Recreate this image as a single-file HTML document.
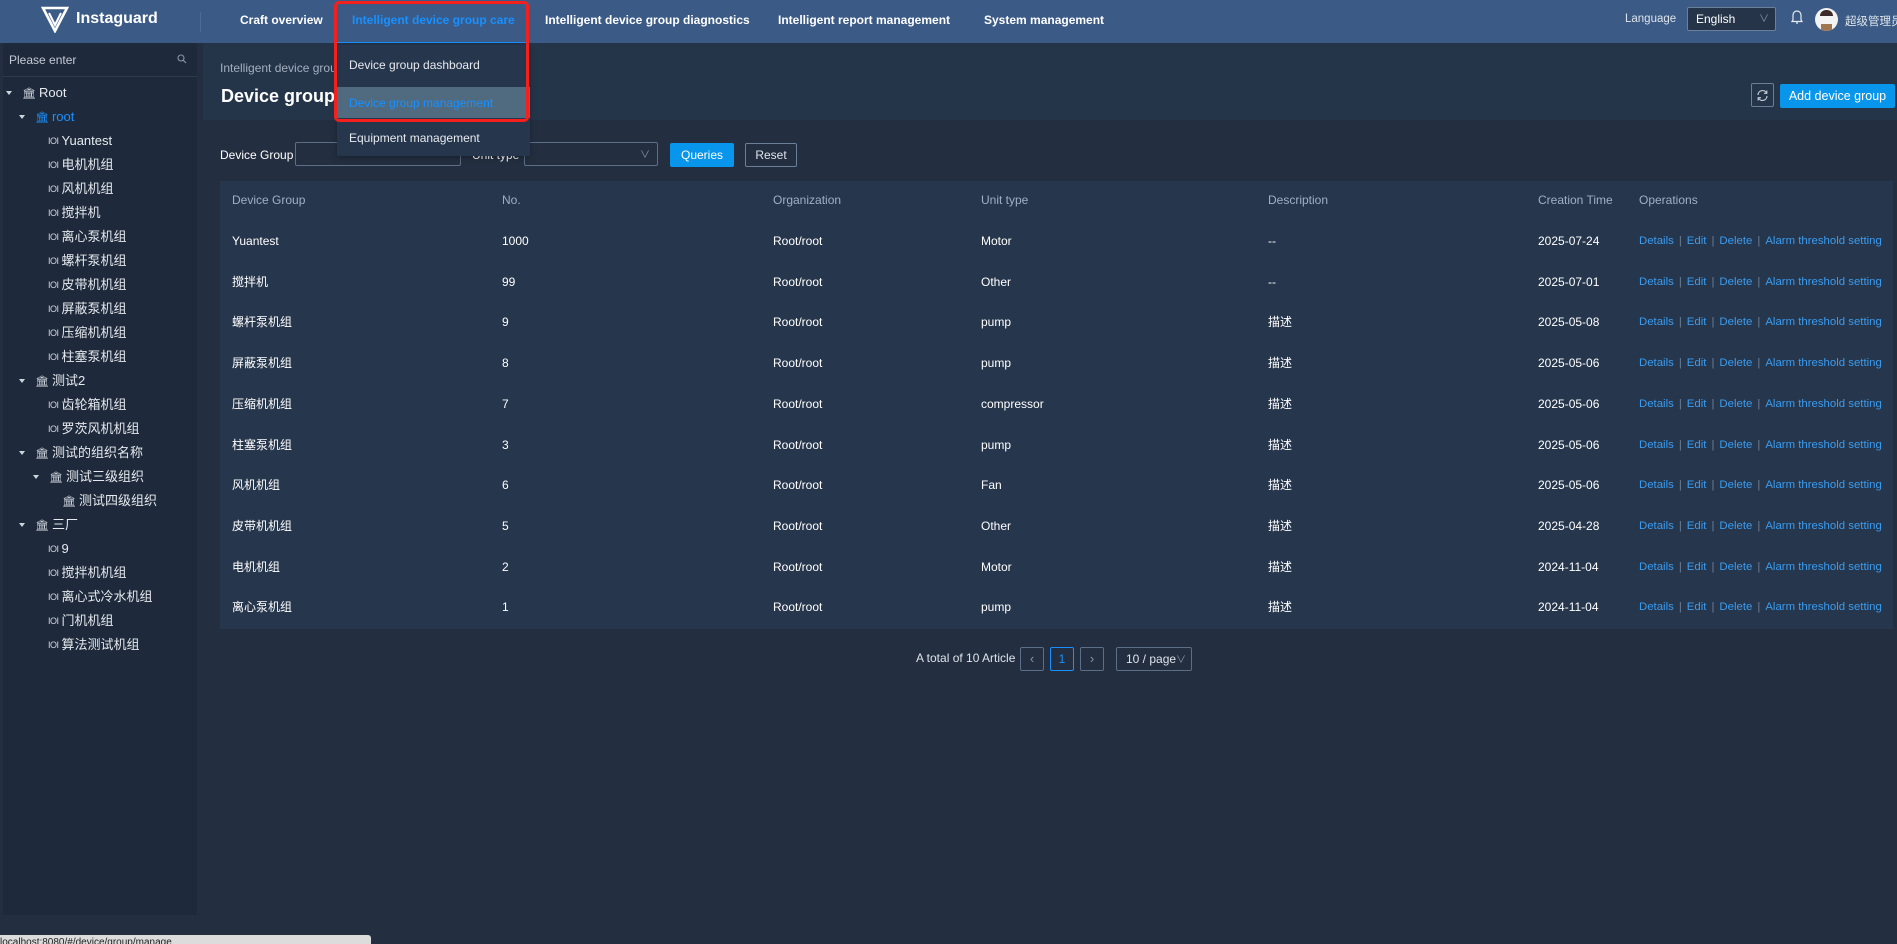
<!DOCTYPE html>
<html><head><meta charset="utf-8"><style>
*{margin:0;padding:0;box-sizing:border-box}
body{width:1897px;height:944px;overflow:hidden;background:#232f40;font-family:"Liberation Sans","Noto Sans CJK SC",sans-serif;font-size:13px;color:#fff;position:relative}
.abs{position:absolute;white-space:nowrap}
#hdr{position:absolute;left:0;top:0;width:1897px;height:43px;background:#3b5b86}
.nav{position:absolute;top:13px;font-weight:bold;font-size:12px;color:#fff}
#side{position:absolute;left:3px;top:43px;width:194px;height:872px;background:#1e2a3b}
.ti{position:absolute;font-size:13px;color:#e6e9ee;white-space:nowrap;line-height:16px}
.ti b{font-weight:normal;font-size:9px;color:#cfd5dd;margin-right:3px;letter-spacing:-0.5px;vertical-align:1px}
.ti s{text-decoration:none;font-size:11px;color:#cfd5dd;margin-right:3px}
.car{position:absolute;width:0;height:0;border-left:3px solid transparent;border-right:3px solid transparent;border-top:4px solid #cfd5dd}
.th{position:absolute;top:193px;color:#9fb0c6;font-size:12px}
.td{position:absolute;font-size:12px;color:#fff;line-height:14px}
.op{color:#3a9cf0;font-size:11.4px}.op i{color:#6d7f95;font-style:normal;margin:0 5px}
.btn{position:absolute;border-radius:2px;font-size:12px;text-align:center}
</style></head><body>
<div id="hdr"></div>
<svg class="abs" style="left:41px;top:6px" width="28" height="27" viewBox="0 0 28 27"><path d="M2 2 L14 25 L26 2 Z" fill="none" stroke="#fff" stroke-width="2.6"/><path d="M8 7 L14 19 L20 7" fill="none" stroke="#fff" stroke-width="2"/></svg>
<div class="abs" style="left:76px;top:10px;font-size:16px;font-weight:bold">Instaguard</div>
<div class="abs" style="left:200px;top:12px;width:1px;height:20px;background:#4e6d96"></div>
<div class="nav" style="left:240px">Craft overview</div>
<div class="nav" style="left:352px;color:#1890ff">Intelligent device group care</div>
<div class="abs" style="left:337px;top:42px;width:192px;height:2px;background:#1890ff"></div>
<div class="nav" style="left:545px">Intelligent device group diagnostics</div>
<div class="nav" style="left:778px">Intelligent report management</div>
<div class="nav" style="left:984px">System management</div>
<div class="abs" style="left:1625px;top:13px;font-size:11.5px;color:#dde3ea">Language</div>
<div class="abs" style="left:1687px;top:7px;width:89px;height:24px;background:#253449;border:1px solid #6b7f99;border-radius:2px"></div>
<div class="abs" style="left:1696px;top:12px;font-size:12px">English</div>
<div class="abs" style="left:1759px;top:10px;font-size:10px;color:#8896a8">∨</div>
<svg class="abs" style="left:1790px;top:9px" width="14" height="16" viewBox="0 0 14 16"><path d="M3 11 V6 a4 4 0 0 1 8 0 V11 L12 12.5 H2 Z M6 14 h2" fill="none" stroke="#e6e9ee" stroke-width="1.2"/></svg>
<div class="abs" style="left:1815px;top:8px;width:23px;height:23px;border-radius:50%;background:#f3f3f3;overflow:hidden"><div style="position:absolute;left:5px;top:2px;width:13px;height:6px;background:#3a2a2a;border-radius:6px 6px 0 0"></div><div style="position:absolute;left:6px;top:16px;width:11px;height:7px;background:#a07650"></div></div>
<div class="abs" style="left:1845px;top:13px;font-size:11.5px;color:#dde3ea">超级管理员</div>

<div id="side"></div>
<div class="abs" style="left:9px;top:53px;font-size:12px;color:#c3cad4">Please enter</div>
<svg class="abs" style="left:177px;top:54px" width="10" height="10" viewBox="0 0 10 10"><circle cx="4" cy="4" r="3" fill="none" stroke="#8896a8" stroke-width="1.1"/><path d="M6.3 6.3 L9 9" stroke="#8896a8" stroke-width="1.1"/></svg>
<div class="abs" style="left:3px;top:76px;width:194px;height:1px;background:#2c3a4e"></div>

<div class="car" style="left:6px;top:91px"></div><div class="ti" style="left:22px;top:85px"><s>🏛</s>Root</div>
<div class="car" style="left:19px;top:115px"></div><div class="ti" style="left:35px;top:109px;color:#1890ff"><s style="color:#1890ff">🏛</s>root</div>
<div class="ti" style="left:48px;top:133px"><b>IOI</b>Yuantest</div>
<div class="ti" style="left:48px;top:157px"><b>IOI</b>电机机组</div>
<div class="ti" style="left:48px;top:181px"><b>IOI</b>风机机组</div>
<div class="ti" style="left:48px;top:205px"><b>IOI</b>搅拌机</div>
<div class="ti" style="left:48px;top:229px"><b>IOI</b>离心泵机组</div>
<div class="ti" style="left:48px;top:253px"><b>IOI</b>螺杆泵机组</div>
<div class="ti" style="left:48px;top:277px"><b>IOI</b>皮带机机组</div>
<div class="ti" style="left:48px;top:301px"><b>IOI</b>屏蔽泵机组</div>
<div class="ti" style="left:48px;top:325px"><b>IOI</b>压缩机机组</div>
<div class="ti" style="left:48px;top:349px"><b>IOI</b>柱塞泵机组</div>
<div class="car" style="left:19px;top:379px"></div><div class="ti" style="left:35px;top:373px"><s>🏛</s>测试2</div>
<div class="ti" style="left:48px;top:397px"><b>IOI</b>齿轮箱机组</div>
<div class="ti" style="left:48px;top:421px"><b>IOI</b>罗茨风机机组</div>
<div class="car" style="left:19px;top:451px"></div><div class="ti" style="left:35px;top:445px"><s>🏛</s>测试的组织名称</div>
<div class="car" style="left:33px;top:475px"></div><div class="ti" style="left:49px;top:469px"><s>🏛</s>测试三级组织</div>
<div class="ti" style="left:62px;top:493px"><s>🏛</s>测试四级组织</div>
<div class="car" style="left:19px;top:523px"></div><div class="ti" style="left:35px;top:517px"><s>🏛</s>三厂</div>
<div class="ti" style="left:48px;top:541px"><b>IOI</b>9</div>
<div class="ti" style="left:48px;top:565px"><b>IOI</b>搅拌机机组</div>
<div class="ti" style="left:48px;top:589px"><b>IOI</b>离心式冷水机组</div>
<div class="ti" style="left:48px;top:613px"><b>IOI</b>门机机组</div>
<div class="ti" style="left:48px;top:637px"><b>IOI</b>算法测试机组</div>

<div class="abs" style="left:203px;top:43px;width:1694px;height:77px;background:#253549"></div>
<div class="abs" style="left:220px;top:61px;font-size:12px;color:#a3afbf">Intelligent device group care</div>
<div class="abs" style="left:221px;top:86px;font-size:18px;font-weight:bold">Device group management</div>
<div class="abs" style="left:1751px;top:83px;width:23px;height:24px;border:1px solid #6b7f99;border-radius:2px"></div>
<svg class="abs" style="left:1756px;top:89px" width="13" height="13" viewBox="0 0 13 13"><path d="M2 6 A4.5 4.5 0 0 1 10.5 4 M11 7 A4.5 4.5 0 0 1 2.5 9" fill="none" stroke="#c3cad4" stroke-width="1.2"/><path d="M10.8 1.5 V4.3 H8" fill="none" stroke="#c3cad4" stroke-width="1.2"/><path d="M2.2 11.5 V8.7 H5" fill="none" stroke="#c3cad4" stroke-width="1.2"/></svg>
<div class="btn" style="left:1780px;top:84px;width:115px;height:24px;background:#0895ec;line-height:24px;font-size:12.5px">Add device group</div>

<div class="abs" style="left:220px;top:148px;font-size:12px">Device Group</div>
<div class="abs" style="left:295px;top:142px;width:166px;height:24px;border:1px solid #5d6f87;border-radius:2px"></div>
<div class="abs" style="left:472px;top:148px;font-size:12px">Unit type</div>
<div class="abs" style="left:524px;top:142px;width:134px;height:24px;border:1px solid #5d6f87;border-radius:2px"></div>
<div class="abs" style="left:640px;top:146px;font-size:10px;color:#8896a8">∨</div>
<div class="btn" style="left:670px;top:143px;width:64px;height:24px;background:#0895ec;line-height:24px">Queries</div>
<div class="btn" style="left:745px;top:143px;width:52px;height:24px;border:1px solid #6b7f99;line-height:22px;color:#dde3ea">Reset</div>

<div class="abs" style="left:220px;top:181px;width:1673px;height:448px;background:#26364c"></div>
<div class="th" style="left:232px">Device Group</div><div class="th" style="left:502px">No.</div><div class="th" style="left:773px">Organization</div><div class="th" style="left:981px">Unit type</div><div class="th" style="left:1268px">Description</div><div class="th" style="left:1538px">Creation Time</div><div class="th" style="left:1639px">Operations</div>

<div id="rows"></div>
<script>
var d=[["Yuantest","1000","Motor","--","2025-07-24"],["搅拌机","99","Other","--","2025-07-01"],["螺杆泵机组","9","pump","描述","2025-05-08"],["屏蔽泵机组","8","pump","描述","2025-05-06"],["压缩机机组","7","compressor","描述","2025-05-06"],["柱塞泵机组","3","pump","描述","2025-05-06"],["风机机组","6","Fan","描述","2025-05-06"],["皮带机机组","5","Other","描述","2025-04-28"],["电机机组","2","Motor","描述","2024-11-04"],["离心泵机组","1","pump","描述","2024-11-04"]];
var h="";d.forEach(function(r,i){var y=234+i*40.7;
h+='<div class="td" style="left:232px;top:'+y+'px">'+r[0]+'</div><div class="td" style="left:502px;top:'+y+'px">'+r[1]+'</div><div class="td" style="left:773px;top:'+y+'px">Root/root</div><div class="td" style="left:981px;top:'+y+'px">'+r[2]+'</div><div class="td" style="left:1268px;top:'+y+'px">'+r[3]+'</div><div class="td" style="left:1538px;top:'+y+'px">'+r[4]+'</div><div class="td op" style="left:1639px;top:'+y+'px">Details<i>|</i>Edit<i>|</i>Delete<i>|</i>Alarm threshold setting</div>';});
document.getElementById("rows").innerHTML=h;
</script>

<div class="abs" style="left:916px;top:651px;font-size:12px;color:#dde3ea">A total of 10 Article</div>
<div class="abs" style="left:1020px;top:647px;width:24px;height:24px;border:1px solid #5d6f87;border-radius:2px;color:#8896a8;text-align:center;line-height:22px">‹</div>
<div class="abs" style="left:1050px;top:647px;width:24px;height:24px;border:1px solid #1890ff;border-radius:2px;color:#1890ff;text-align:center;line-height:22px;font-size:12px">1</div>
<div class="abs" style="left:1080px;top:647px;width:24px;height:24px;border:1px solid #5d6f87;border-radius:2px;color:#8896a8;text-align:center;line-height:22px">›</div>
<div class="abs" style="left:1116px;top:647px;width:76px;height:24px;border:1px solid #5d6f87;border-radius:2px;color:#dde3ea;font-size:12px;line-height:22px;padding-left:9px">10 / page<span style="color:#8896a8;font-size:10px">∨</span></div>

<div class="abs" style="left:337px;top:45px;width:193px;height:111px;background:#26364c;box-shadow:0 2px 6px rgba(0,0,0,.3)"></div>
<div class="abs" style="left:349px;top:58px;font-size:12px;color:#e6e9ee">Device group dashboard</div>
<div class="abs" style="left:337px;top:87px;width:193px;height:31px;background:#506b80"></div>
<div class="abs" style="left:349px;top:96px;font-size:12px;color:#1890ff">Device group management</div>
<div class="abs" style="left:349px;top:131px;font-size:12px;color:#e6e9ee">Equipment management</div>
<div class="abs" style="left:334px;top:1px;width:195px;height:121px;border:3px solid #f5201c;border-radius:5px"></div>

<div class="abs" style="left:0;top:935px;width:371px;height:9px;background:#dcdcdc;border-radius:0 3px 0 0;font-size:10px;color:#222;overflow:hidden;line-height:16px">localhost:8080/#/device/group/manage</div>
</body></html>
